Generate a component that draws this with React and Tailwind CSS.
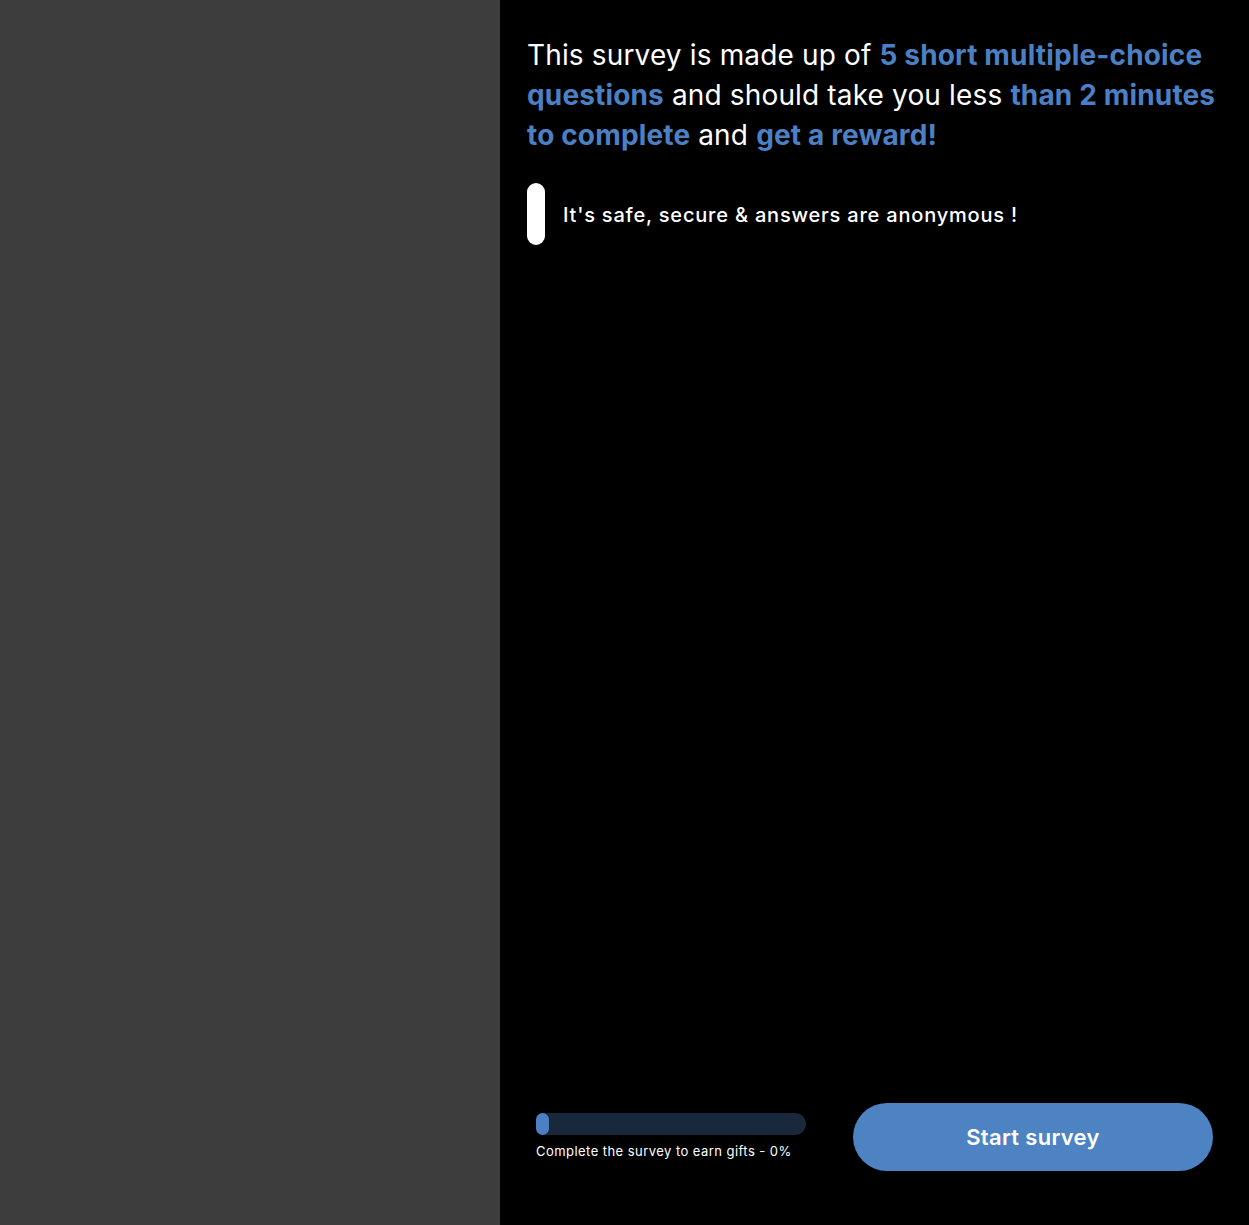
export default function App() {
  const font = { fontFamily: '"Inter", "Open Sans", sans-serif' };
  return (
    <div className="flex h-[1225px] w-full overflow-hidden" style={font}>
      <div className="w-[500px] shrink-0 bg-[#3d3d3d]" />
      <div className="flex min-w-0 flex-1 flex-col justify-between bg-black">
        <div className="px-[27px] pt-[35px]">
          <p className="text-[28px] leading-[40px] text-white tracking-[0.15px] whitespace-nowrap">
            This survey is made up of <span className="font-bold text-[#4b80c4]">5 short multiple-choice</span>
            <br />
            <span className="font-bold text-[#4b80c4]">questions</span> and should take you less{" "}
            <span className="font-bold text-[#4b80c4]">than 2 minutes</span>
            <br />
            <span className="font-bold text-[#4b80c4]">to complete</span> and{" "}
            <span className="font-bold text-[#4b80c4]">get a reward!</span>
          </p>
          <div className="mt-[28px] flex items-center gap-[18px]">
            <div className="h-[62px] w-[18px] rounded-full bg-white" />
            <span className="mt-[1px] text-[20px] font-medium tracking-[0.8px] text-white">
              It's safe, secure &amp; answers are anonymous !
            </span>
          </div>
        </div>
        <div className="flex items-center justify-between pb-[54px] pl-[36px] pr-[36px]">
          <div className="flex flex-col">
            <div className="h-[22px] w-[270px] rounded-full bg-[#1a283b]">
              <div className="h-[22px] w-[13px] rounded-full bg-[#4b80c4]" />
            </div>
            <span className="mt-[7px] text-[13px] tracking-[0.45px] text-white">
              Complete the survey to earn gifts - 0%
            </span>
          </div>
          <button className="flex h-[68px] w-[360px] items-center justify-center rounded-full bg-[#4d82c3] text-[22px] font-semibold tracking-[0.3px] text-white">
            Start survey
          </button>
        </div>
      </div>
    </div>
  );
}
